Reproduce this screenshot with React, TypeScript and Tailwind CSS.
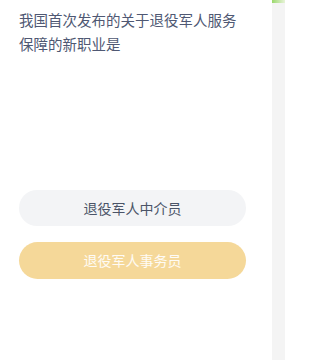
export default function App() {
    const font = {fontFamily: '"Noto Sans CJK SC", "Noto Sans", sans-serif'};
    return (
        <div className="flex h-[360px] w-[289px] bg-white overflow-hidden" style={font}>
            <main className="w-[272px] shrink-0 px-[19px] pt-[8px]">
                <p className="w-[227px] text-[14.5px] leading-[24px] text-[#4f5873]">
                    我国首次发布的关于退役军人服务保障的新职业是
                </p>
                <div className="mt-[134px] flex flex-col gap-[16px] w-[227px]">
                    <button className="h-[36px] rounded-full bg-[#f3f4f6] text-[14px] text-[#4b5468]">
                        退役军人中介员
                    </button>
                    <button className="h-[37px] rounded-full bg-[#f5d899] text-[14px] text-white/90">
                        退役军人事务员
                    </button>
                </div>
            </main>
            <div className="w-[13px] shrink-0 bg-[#f4f4f4] flex flex-col">
                <div className="h-[3px] bg-gradient-to-r from-[#9bd86b] to-[#e8f3d8]"/>
            </div>
        </div>
    );
}
